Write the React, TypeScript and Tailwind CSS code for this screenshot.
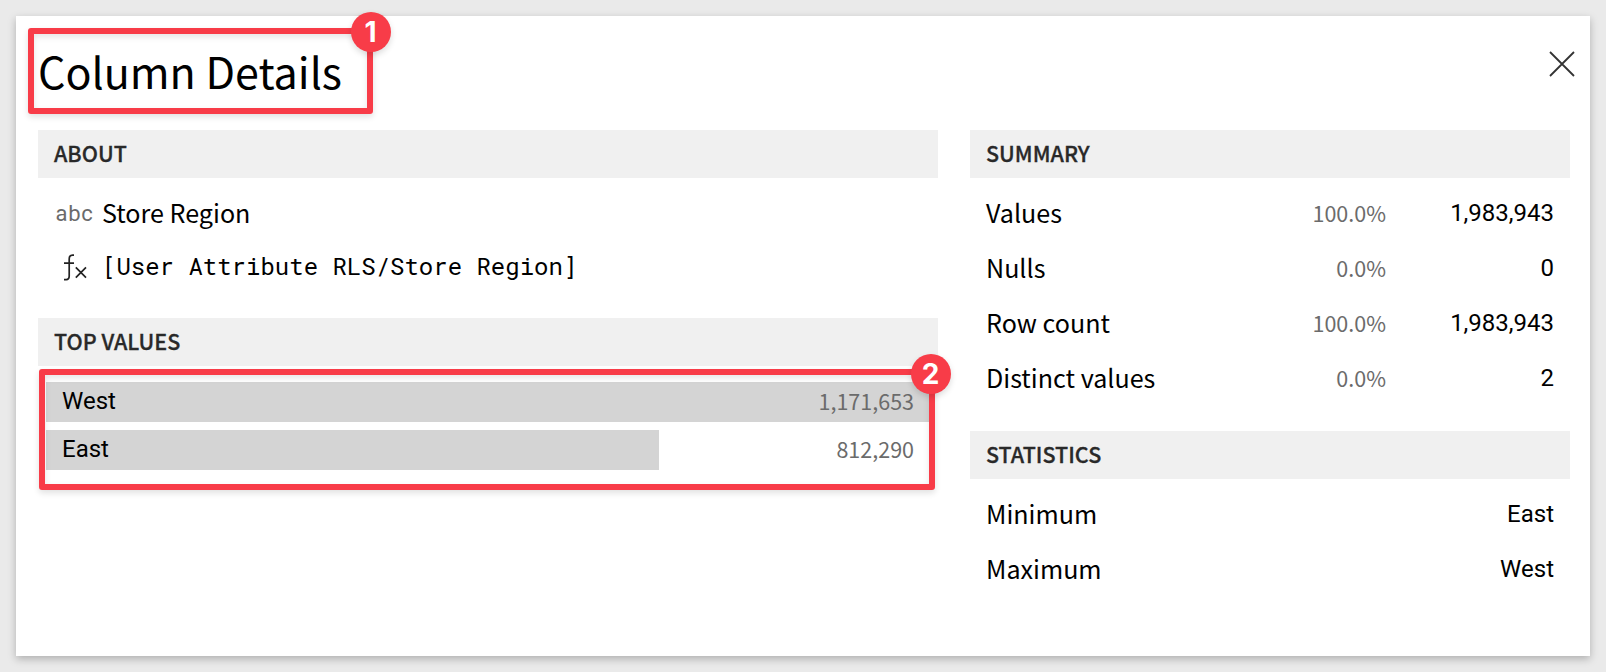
import type { ReactNode } from 'react';

const SANS = "font-['Noto_Sans_CJK_JP',sans-serif]";
const ROBOTO = "font-['Roboto',sans-serif]";

const topValues = [
  { label: 'West', count: 1171653 },
  { label: 'East', count: 812290 },
];

const summary = [
  { label: 'Values', percent: '100.0%', value: '1,983,943' },
  { label: 'Nulls', percent: '0.0%', value: '0' },
  { label: 'Row count', percent: '100.0%', value: '1,983,943' },
  { label: 'Distinct values', percent: '0.0%', value: '2' },
];

const statistics = [
  { label: 'Minimum', value: 'East' },
  { label: 'Maximum', value: 'West' },
];

function SectionHeader({ children }: { children: ReactNode }) {
  return (
    <h2 className="h-12 bg-[#f0f0f0] px-4 text-[21.5px] leading-[46px] font-medium text-[#292929] [-webkit-text-stroke:0.3px_#292929]">
      {children}
    </h2>
  );
}

function Callout({ number, className, badge }: { number: number; className: string; badge: string }) {
  return (
    <div
      className={`pointer-events-none absolute rounded-[3px] border-6 border-[#f83c48] shadow-[0_3px_6px_rgba(0,0,0,0.12),inset_0_3px_6px_rgba(0,0,0,0.1)] ${className}`}
    >
      <span
        className={`absolute size-10 rounded-full bg-[#f83c48] pr-px text-center font-['Inter',sans-serif] text-[28px] leading-[40px] font-bold text-white shadow-[0_3px_6px_rgba(0,0,0,0.14)] ${badge}`}
      >
        {number}
      </span>
    </div>
  );
}

function DetailRow({ label, percent, value }: { label: string; percent?: string; value: string }) {
  return (
    <div className="flex h-[55px] items-center px-4 text-black">
      <span className="flex-1 pb-[3px] text-[25.1px] leading-[36px]">{label}</span>
      {percent && <span className="pb-0.5 text-[21.5px] leading-[36px] text-[#6b6b6b]">{percent}</span>}
      <span className={`${ROBOTO} w-[168px] pb-0.5 text-right text-2xl leading-[36px]`}>{value}</span>
    </div>
  );
}

export default function App() {
  const max = topValues[0].count;
  return (
    <div className={`${SANS} h-[672px] w-[1606px] overflow-hidden bg-[#eaeaea] p-4`}>
      <main className="relative h-[640px] w-[1574px] bg-white pr-5 pl-[22px] shadow-[0_3px_8px_rgba(0,0,0,0.25)]">
        <header className="flex h-[114px] justify-between">
          <h1 className="pt-6 text-[43px] leading-[60px] text-black">Column Details</h1>
          <button aria-label="Close" className="mt-[35px] mr-[-5px] h-[26px] w-[26px]">
            <svg viewBox="0 0 26 26" className="size-[26px]" fill="none" stroke="#333" strokeWidth="1.8">
              <path d="M1 1L25 25M25 1L1 25" />
            </svg>
          </button>
        </header>
        <div className="flex gap-8">
          <div className="w-[900px]">
            <SectionHeader>ABOUT</SectionHeader>
            <div className="flex h-[72px] items-center pl-[17.5px]">
              <span className={`${ROBOTO} w-[46.5px] pb-0.5 text-[22px] tracking-[0.7px] text-[#6b6b6b]`}>abc</span>
              <span className="pb-1 text-[25.1px] leading-[36px] text-black">Store Region</span>
            </div>
            <div className="flex h-[68px] items-start pl-[25px]">
              <svg viewBox="0 0 25 32" className="mt-0.5 h-8 w-[25px]" fill="none" stroke="#222" strokeWidth="1.7">
                <path d="M11 3.2H9.6C7.2 3.2 6.2 4.4 6.2 7V24C6.2 26.6 5.4 27.6 3.2 27.6H1M1 11.2H11M12.8 15.4L23 25.6M23 15.4L12.8 25.6" />
              </svg>
              <span className="ml-3.5 font-['Roboto_Mono','Noto_Sans_Mono_CJK_JP','Liberation_Mono',monospace] text-2xl leading-[32px] text-black">
                [User Attribute RLS/Store Region]
              </span>
            </div>
            <SectionHeader>TOP VALUES</SectionHeader>
            <div className="flex flex-col gap-2 px-2 pt-4">
              {topValues.map(({ label, count }) => (
                <div key={label} className="grid h-10 items-center">
                  <div
                    className="col-start-1 row-start-1 h-10 bg-[#d4d4d4]"
                    style={{ width: `${(count / max) * 100}%` }}
                  />
                  <div className="col-start-1 row-start-1 flex items-center justify-between px-4 pb-0.5">
                    <span className={`${ROBOTO} text-2xl text-black`}>{label}</span>
                    <span className="text-[21.5px] leading-[38px] text-[#6b6b6b]">
                      {count.toLocaleString('en-US')}
                    </span>
                  </div>
                </div>
              ))}
            </div>
          </div>
          <div className="w-[600px]">
            <SectionHeader>SUMMARY</SectionHeader>
            <div className="h-[253px] pt-2">
              {summary.map((row) => (
                <DetailRow key={row.label} {...row} />
              ))}
            </div>
            <SectionHeader>STATISTICS</SectionHeader>
            <div className="pt-2">
              {statistics.map((row) => (
                <DetailRow key={row.label} {...row} />
              ))}
            </div>
          </div>
        </div>
        <Callout number={1} className="top-3 left-3 h-[86px] w-[345px]" badge="-top-[22px] -right-[24px]" />
        <Callout number={2} className="top-[353px] left-[23px] h-[121px] w-[896px]" badge="-top-[21px] -right-[22px]" />
      </main>
    </div>
  );
}
